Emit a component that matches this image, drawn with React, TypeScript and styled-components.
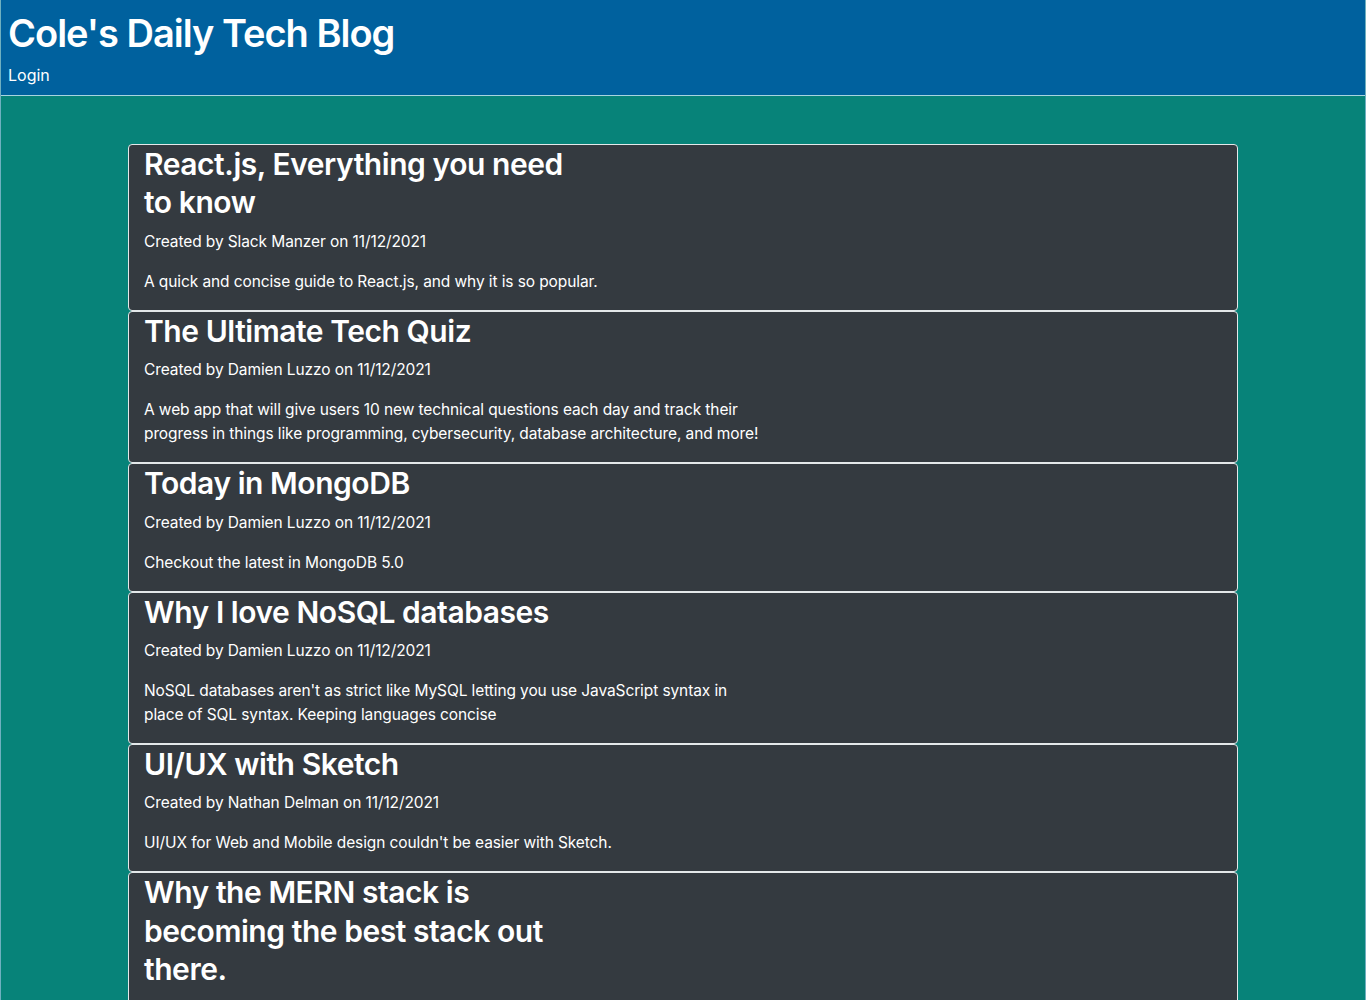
import React from 'react';
import styled, { createGlobalStyle } from 'styled-components';

const GlobalStyle = createGlobalStyle`
  html, body {
    margin: 0;
    padding: 0;
    background: #078379;
  }
  body {
    font-family: Inter, "Noto Sans", "Liberation Sans", sans-serif;
    color: #fff;
    -webkit-font-smoothing: antialiased;
  }
`;

const Page = styled.div`
  min-height: 100vh;
  background: #078379;
  border-left: 1px solid #6fb0c0;
  border-right: 1px solid #6fb0c0;
  box-sizing: border-box;
`;

const Header = styled.header`
  background: #00619e;
  padding: 9px 7px 8px;
  border-bottom: 1px solid #a8d4e0;
`;

const SiteTitle = styled.h1`
  margin: 0 0 6px;
  font-size: 38px;
  line-height: 48px;
  font-weight: 600;
  letter-spacing: -1px;
`;

const NavLink = styled.a`
  display: block;
  color: #fff;
  font-size: 16px;
  line-height: 24px;
  text-decoration: none;
  cursor: pointer;
`;

const Main = styled.main`
  padding-top: 48px;
`;

const Container = styled.div`
  width: 1110px;
  margin: 0 auto;
`;

const Card = styled.article`
  background: #343a40;
  border: 1px solid #e4e8ea;
  border-radius: 4px;
  padding: 0 15px;
`;

const PostTitle = styled.h2`
  margin: 0 0 8px;
  max-width: 440px;
  font-size: 30px;
  line-height: 38.4px;
  font-weight: 600;
  letter-spacing: -0.45px;
`;

const Meta = styled.p`
  margin: 0 0 16px;
  font-size: 15.5px;
  line-height: 24px;
  letter-spacing: -0.1px;
`;

const Description = styled.p`
  margin: 0 0 16px;
  max-width: 620px;
  font-size: 15.5px;
  line-height: 24px;
  letter-spacing: -0.1px;
`;

type Post = {
  title: string;
  author: string;
  date: string;
  body: string;
};

const posts: Post[] = [
  {
    title: 'React.js, Everything you need to know',
    author: 'Slack Manzer',
    date: '11/12/2021',
    body: 'A quick and concise guide to React.js, and why it is so popular.',
  },
  {
    title: 'The Ultimate Tech Quiz',
    author: 'Damien Luzzo',
    date: '11/12/2021',
    body:
      'A web app that will give users 10 new technical questions each day and track their progress in things like programming, cybersecurity, database architecture, and more!',
  },
  {
    title: 'Today in MongoDB',
    author: 'Damien Luzzo',
    date: '11/12/2021',
    body: 'Checkout the latest in MongoDB 5.0',
  },
  {
    title: 'Why I love NoSQL databases',
    author: 'Damien Luzzo',
    date: '11/12/2021',
    body:
      "NoSQL databases aren't as strict like MySQL letting you use JavaScript syntax in place of SQL syntax. Keeping languages concise",
  },
  {
    title: 'UI/UX with Sketch',
    author: 'Nathan Delman',
    date: '11/12/2021',
    body: "UI/UX for Web and Mobile design couldn't be easier with Sketch.",
  },
  {
    title: 'Why the MERN stack is becoming the best stack out there.',
    author: 'Slack Manzer',
    date: '11/12/2021',
    body: 'An overview of MongoDB, Express, React and Node, and why developers love them.',
  },
];

const App: React.FC = () => (
  <>
    <GlobalStyle />
    <Page>
      <Header>
        <SiteTitle>Cole's Daily Tech Blog</SiteTitle>
        <NavLink>Login</NavLink>
      </Header>
      <Main>
        <Container>
          {posts.map((post) => (
            <Card key={post.title}>
              <PostTitle>{post.title}</PostTitle>
              <Meta>
                Created by {post.author} on {post.date}
              </Meta>
              <Description>{post.body}</Description>
            </Card>
          ))}
        </Container>
      </Main>
    </Page>
  </>
);

export default App;
